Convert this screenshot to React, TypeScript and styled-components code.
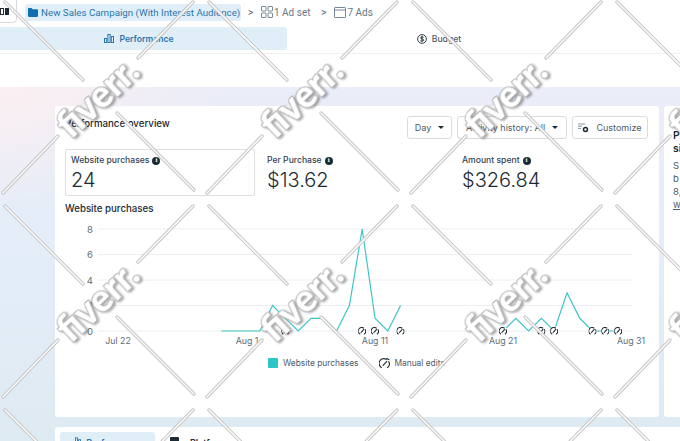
import React from "react";
import styled, { createGlobalStyle } from "styled-components";

const GlobalStyle = createGlobalStyle`
  html, body {
    margin: 0;
    padding: 0;
    background: #fff;
  }
  * {
    box-sizing: border-box;
  }
`;

const Page = styled.div`
  position: relative;
  width: 680px;
  height: 441px;
  overflow: hidden;
  background: #fff;
  color: #1c2b33;
  font-family: Inter, "Liberation Sans", sans-serif;
`;

const Breadcrumbs = styled.div`
  display: flex;
  align-items: center;
  height: 23px;
  padding-top: 1px;
  font-family: Roboto, "Liberation Sans", sans-serif;
  font-size: 10px;
  color: #67788a;
`;

const ColumnsButton = styled.button`
  display: flex;
  align-items: center;
  justify-content: flex-end;
  gap: 1px;
  width: 30px;
  height: 30px;
  margin: -9px 8px 0 -13px;
  padding: 8px 7px 0 0;
  background: #fff;
  border: 1px solid #d5d9dd;
  border-radius: 4px;
`;

const Bar = styled.span<{ $filled?: boolean }>`
  width: 4px;
  height: 7px;
  border: 1px solid #1c2b33;
  background: ${(p) => (p.$filled ? "#1c2b33" : "#fff")};
`;

const CampaignPill = styled.div`
  display: flex;
  align-items: center;
  gap: 3px;
  width: 216px;
  height: 17px;
  padding: 0 3px;
  border-radius: 3px;
  background: #e0eef9;
  color: #2a76ab;
  font-size: 9.75px;
  white-space: nowrap;
`;

const FolderIcon = styled.svg`
  flex: none;
  width: 10px;
  height: 9px;
`;

const Crumb = styled.div<{ $trail?: number }>`
  display: flex;
  align-items: center;
  gap: 1px;
  padding-right: ${(p) => p.$trail ?? 0}px;
  white-space: nowrap;
`;

const Chevron = styled.span`
  width: 9px;
  margin: 0 6px 0 5px;
  color: #4b5a68;
  font-size: 10px;
  text-align: center;
`;

const TabRow = styled.div`
  display: flex;
  gap: 4px;
  height: 27px;
  margin: 4px 0 0 -9px;
  padding-bottom: 3px;
  border-bottom: 1px solid #f0f1f3;
`;

const Tab = styled.div<{ $active?: boolean }>`
  display: flex;
  align-items: center;
  justify-content: center;
  gap: 5px;
  width: 296px;
  border-radius: 3px;
  background: ${(p) => (p.$active ? "#e0eef8" : "transparent")};
  color: ${(p) => (p.$active ? "#2a76ab" : "#4d5c69")};
  font-size: 8.6px;
  font-weight: ${(p) => (p.$active ? 600 : 500)};
`;

const Spacer = styled.div`
  height: 33px;
`;

const Backdrop = styled.div`
  display: flex;
  flex-direction: column;
  gap: 10px;
  height: 360px;
  padding: 19px 0 0 55px;
  background: radial-gradient(ellipse 220px 120px at 0 0, #fbeff1, rgba(251, 239, 241, 0)),
    linear-gradient(180deg, #ebedf8 0%, #e3edf8 50%, #deeaf2 100%);
`;

const CardRow = styled.div`
  display: flex;
  gap: 5px;
`;

const Card = styled.section`
  flex: none;
  width: 604px;
  height: 311px;
  padding: 10px;
  border-radius: 3px;
  background: #fff;
`;

const SideCard = styled.aside`
  flex: none;
  width: 100px;
  height: 311px;
  padding: 10px 9px;
  border-radius: 3px;
  background: #fff;
`;

const SideTitle = styled.div`
  font-size: 10.5px;
  font-weight: 600;
  line-height: 13px;
`;

const SideBody = styled.div`
  margin-top: 4px;
  font-size: 9.5px;
  line-height: 13px;
  color: #4d5c69;
`;

const SideLink = styled.span`
  text-decoration: underline;
`;

const Header = styled.header`
  display: flex;
  align-items: flex-start;
  height: 23px;
`;

const CardTitle = styled.h2`
  flex: 1;
  margin: 2px 0 0;
  font-size: 9.7px;
  font-weight: 500;
  line-height: 12px;
`;

const Controls = styled.div`
  display: flex;
  gap: 5px;
  margin-right: 1px;
`;

const ControlButton = styled.button<{ $width: number }>`
  display: flex;
  align-items: center;
  justify-content: center;
  gap: 7px;
  width: ${(p) => p.$width}px;
  height: 23px;
  padding: 0;
  background: #fff;
  border: 1px solid #d8dce0;
  border-radius: 3px;
  color: #4d5c69;
  font-family: inherit;
  font-size: 9px;
`;

const Caret = styled.span`
  width: 0;
  height: 0;
  border: 3.5px solid transparent;
  border-top: 3.5px solid #1c2b33;
  border-bottom: 0;
`;

const Metrics = styled.div`
  display: flex;
  height: 47px;
  margin-top: 10px;
`;

const Metric = styled.div<{ $selected?: boolean; $width: number; $offset?: number }>`
  width: ${(p) => p.$width}px;
  margin-left: ${(p) => p.$offset ?? 0}px;
  padding: 5px 5px;
  border: 1px solid ${(p) => (p.$selected ? "#dcdfe3" : "transparent")};
  border-radius: 2px;
`;

const MetricLabel = styled.div`
  display: flex;
  align-items: center;
  gap: 3px;
  font-size: 8.6px;
  font-weight: 500;
  line-height: 11px;
  color: #344250;
`;

const InfoDot = styled.span`
  display: inline-flex;
  align-items: center;
  justify-content: center;
  width: 8px;
  height: 8px;
  border-radius: 50%;
  background: #1c2b33;
  color: #fff;
  font-family: "Liberation Serif", serif;
  font-size: 7px;
  font-weight: 700;
  line-height: 1;
`;

const MetricValue = styled.div`
  margin-top: 2px;
  font-size: 20px;
  font-weight: 300;
  line-height: 24px;
`;

const ChartTitle = styled.h3`
  margin: 6px 0 -1px;
  font-size: 9.7px;
  font-weight: 500;
  line-height: 14px;
`;

const ChartSvg = styled.svg`
  display: block;
  width: 584px;
  height: 135px;
`;

const Legend = styled.div`
  display: flex;
  align-items: center;
  height: 10px;
  margin: 8px 0 0 203px;
  font-size: 8.4px;
  color: #4d5c69;
`;

const Swatch = styled.span`
  width: 10px;
  height: 10px;
  margin-right: 5px;
  border-radius: 1px;
  background: #2cc6c6;
`;

const LegendGap = styled.span`
  width: 21px;
`;

const LegendIcon = styled.svg`
  width: 11px;
  height: 11px;
  margin-right: 4px;
`;

const BottomCard = styled.section`
  height: 60px;
  padding: 5px;
  border-radius: 3px 0 0 0;
  background: #fff;
`;

const BottomTabs = styled.div`
  display: flex;
  align-items: flex-start;
`;

const BottomTab = styled.div<{ $active?: boolean }>`
  display: flex;
  justify-content: center;
  gap: ${(p) => (p.$active ? "5px" : "11px")};
  width: ${(p) => (p.$active ? "95px" : "auto")};
  height: 28px;
  margin-left: ${(p) => (p.$active ? "0" : "15px")};
  padding-top: 5px;
  border-radius: 3px;
  background: ${(p) => (p.$active ? "#e0eef8" : "transparent")};
  color: ${(p) => (p.$active ? "#2a76ab" : "#1c2b33")};
  font-size: 9px;
  font-weight: 600;
`;

const Watermark = styled.svg`
  position: absolute;
  top: 0;
  left: 0;
  width: 680px;
  height: 441px;
  pointer-events: none;
`;

const MarkText = styled.text`
  fill: #fff;
  stroke: #b4b4b4;
  stroke-width: 2px;
  stroke-linejoin: round;
  paint-order: stroke;
  font-family: Lato, Inter, sans-serif;
  font-size: 37px;
  font-weight: 900;
  filter: drop-shadow(1.5px 2px 1px rgba(0, 0, 0, 0.35));
`;

const LINE_TEAL = "#3fc4c6";
const X_AUG1 = 247;
const DAY = 12.8;

const dayX = (d: number) => X_AUG1 + DAY * (d - 1);
const valueY = (v: number) => 331 - v * 12.75;

// x values are days of August, Jul 30 is -1
const firstRun: [number, number][] = [
  [-1, 0], [0, 0], [1, 0], [2, 0], [3, 2], [4, 1], [5, 0], [6, 1], [7, 1],
  [8, 0], [9, 2], [10, 8], [11, 1], [12, 0], [13, 2],
];
const secondRun: [number, number][] = [
  [21, 0], [22, 1], [23, 0], [24, 1], [25, 0], [26, 3], [27, 1], [28, 0], [29, 0], [30, 0],
];
const editDays = [4, 10, 11, 13, 21, 24, 25, 28, 29, 30];
const gridValues = [8, 6, 4, 2, 0];
const dateLabels: [string, number][] = [
  ["Jul 22", 118], ["Aug 1", 247], ["Aug 11", 375], ["Aug 21", 503], ["Aug 31", 631],
];

const toPoints = (run: [number, number][]) =>
  run.map(([d, v]) => `${dayX(d).toFixed(1)},${valueY(v).toFixed(1)}`).join(" ");

function EditIcon({ x, y, size }: { x: number; y: number; size: number }) {
  return (
    <svg x={x - size / 2} y={y - size / 2} width={size} height={size} viewBox="0 0 12 12" fill="none">
      <path d="M2.600 10.400A5 5 0 0 1 8 1.500" stroke="#1c2b33" strokeWidth="1.600" strokeLinecap="round" />
      <path d="M10.600 4A5 5 0 0 1 9.400 10.400" stroke="#1c2b33" strokeWidth="1.600" strokeLinecap="round" />
      <path d="M4.400 8 8.500 3.600" stroke="#1c2b33" strokeWidth="1.600" strokeLinecap="round" />
    </svg>
  );
}

function Chart() {
  return (
    <ChartSvg viewBox="65 215 584 135">
      {gridValues.map((v) => (
        <g key={v}>
          <line x1={98} x2={632} y1={valueY(v)} y2={valueY(v)} stroke="#eceef0" strokeWidth="1" />
          <text x={93} y={valueY(v) + 3.500} textAnchor="end" fontSize="9.500" fill="#5f6d79">
            {v}
          </text>
        </g>
      ))}
      {dateLabels.map(([label, x]) => (
        <text key={label} x={x} y={344} textAnchor="middle" fontSize="8.800" fill="#5f6d79">
          {label}
        </text>
      ))}
      <polyline points={toPoints(firstRun)} fill="none" stroke={LINE_TEAL} strokeWidth="1.200" />
      <polyline points={toPoints(secondRun)} fill="none" stroke={LINE_TEAL} strokeWidth="1.200" />
      {editDays.map((d) => (
        <g key={d}>
          <circle cx={dayX(d)} cy={331} r={4.500} fill="#fff" />
          <EditIcon x={dayX(d)} y={331} size={8} />
        </g>
      ))}
    </ChartSvg>
  );
}

function WatermarkTile({ col, row }: { col: number; row: number }) {
  const segments = [
    "M5 2 83 80",
    "M193 2 138 58",
    "M117 113 194 190",
    "M58 136 3 193",
  ];
  return (
    <g transform={`translate(${col * 204} ${row * 204})`}>
      {segments.map((d) => (
        <g key={d}>
          <path d={d} stroke="#c4c4c4" strokeWidth="3.400" strokeLinecap="round" />
          <path d={d} stroke="#fbfbfb" strokeWidth="1.600" strokeLinecap="round" />
        </g>
      ))}
      <MarkText x={71} y={140} transform="rotate(-43 71 140)">
        fiverr.
      </MarkText>
    </g>
  );
}

const tileCols = [0, 1, 2, 3];
const tileRows = [-1, 0, 1, 2];

export default function App() {
  return (
    <Page>
      <GlobalStyle />
      <Breadcrumbs>
        <ColumnsButton aria-label="Columns">
          <Bar />
          <Bar $filled />
        </ColumnsButton>
        <CampaignPill>
          <FolderIcon viewBox="0 0 10 9">
            <path d="M0 1.200C0 .5.5 0 1.200 0h2.300l1 1.300h4.300c.7 0 1.200.5 1.200 1.200v5.300c0 .7-.5 1.200-1.200 1.200H1.200C.5 9 0 8.500 0 7.800Z" fill="#0f6fb3" />
          </FolderIcon>
          New Sales Campaign (With Interest Audience)
        </CampaignPill>
        <Chevron>&gt;</Chevron>
        <Crumb $trail={4}>
          <svg width="12" height="12" viewBox="0 0 12 12" fill="none" stroke="#67788a" strokeWidth="0.900">
            <rect x="0.500" y="0.500" width="4.500" height="4.500" rx="0.600" />
            <rect x="7" y="0.500" width="4.500" height="4.500" rx="0.600" />
            <rect x="0.500" y="7" width="4.500" height="4.500" rx="0.600" />
            <rect x="7" y="7" width="4.500" height="4.500" rx="0.600" />
          </svg>
          1 Ad set
        </Crumb>
        <Chevron>&gt;</Chevron>
        <Crumb>
          <svg width="12" height="11" viewBox="0 0 12 11" fill="none" stroke="#67788a" strokeWidth="0.900">
            <rect x="0.500" y="0.500" width="11" height="10" rx="0.600" />
            <path d="M0.500 3H11.500" />
          </svg>
          7 Ads
        </Crumb>
      </Breadcrumbs>
      <TabRow>
        <Tab $active>
          <svg width="10" height="9" viewBox="0 0 10 9" fill="none" stroke="#2a76ab" strokeWidth="1">
            <rect x="0.500" y="4.500" width="2.200" height="4" />
            <rect x="3.900" y="0.500" width="2.200" height="8" />
            <rect x="7.300" y="2.500" width="2.200" height="6" />
          </svg>
          Performance
        </Tab>
        <Tab>
          <svg width="10" height="10" viewBox="0 0 10 10" fill="none" stroke="#1c2b33" strokeWidth="0.900">
            <circle cx="5" cy="5" r="4.400" />
            <path d="M6.600 3.400C6 2.700 3.500 2.600 3.500 3.900 3.500 5.300 6.700 4.700 6.700 6.100 6.700 7.400 4 7.300 3.300 6.600M5 1.900V8.100" />
          </svg>
          Budget
        </Tab>
      </TabRow>
      <Spacer />
      <Backdrop>
        <CardRow>
          <Card>
            <Header>
              <CardTitle>Performance overview</CardTitle>
              <Controls>
                <ControlButton $width={45}>
                  Day <Caret />
                </ControlButton>
                <ControlButton $width={110}>
                  Activity history: All <Caret />
                </ControlButton>
                <ControlButton $width={76}>
                  <svg width="11" height="10" viewBox="0 0 11 10" fill="none" stroke="#1c2b33">
                    <path d="M0 1H7M0 3.200H4M0 5.400H3" strokeWidth="0.800" stroke="#67788a" />
                    <circle cx="7.500" cy="6.500" r="2" strokeWidth="1.500" />
                  </svg>
                  Customize
                </ControlButton>
              </Controls>
            </Header>
            <Metrics>
              <Metric $selected $width={190}>
                <MetricLabel>
                  Website purchases <InfoDot>i</InfoDot>
                </MetricLabel>
                <MetricValue>24</MetricValue>
              </Metric>
              <Metric $width={195} $offset={6}>
                <MetricLabel>
                  Per Purchase <InfoDot>i</InfoDot>
                </MetricLabel>
                <MetricValue>$13.62</MetricValue>
              </Metric>
              <Metric $width={190}>
                <MetricLabel>
                  Amount spent <InfoDot>i</InfoDot>
                </MetricLabel>
                <MetricValue>$326.84</MetricValue>
              </Metric>
            </Metrics>
            <ChartTitle>Website purchases</ChartTitle>
            <Chart />
            <Legend>
              <Swatch />
              Website purchases
              <LegendGap />
              <LegendIcon viewBox="0 0 12 12" fill="none">
                <path d="M2.600 10.400A5 5 0 0 1 8 1.500" stroke="#1c2b33" strokeWidth="1.200" strokeLinecap="round" />
                <path d="M10.600 4A5 5 0 0 1 9.400 10.400" stroke="#1c2b33" strokeWidth="1.200" strokeLinecap="round" />
                <path d="M4.400 8 8.500 3.600M8.500 .5 11 1.800" stroke="#1c2b33" strokeWidth="1.200" strokeLinecap="round" />
              </LegendIcon>
              Manual edits
            </Legend>
          </Card>
          <SideCard>
            <SideTitle>
              Y
              <br />
              P
              <br />
              si
            </SideTitle>
            <SideBody>
              S
              <br />
              b
              <br />
              8,
              <br />
              <SideLink>w</SideLink>
            </SideBody>
          </SideCard>
        </CardRow>
        <BottomCard>
          <BottomTabs>
            <BottomTab $active>
              <svg width="9" height="9" viewBox="0 0 10 9" fill="none" stroke="#2a76ab" strokeWidth="1">
                <rect x="0.500" y="4.500" width="2.200" height="4" />
                <rect x="3.900" y="0.500" width="2.200" height="8" />
                <rect x="7.300" y="2.500" width="2.200" height="6" />
              </svg>
              Performance
            </BottomTab>
            <BottomTab>
              <svg width="9" height="9" viewBox="0 0 9 9" fill="#1c2b33">
                <rect width="9" height="9" rx="1" />
              </svg>
              Platform
            </BottomTab>
          </BottomTabs>
        </BottomCard>
      </Backdrop>
      <Watermark viewBox="0 0 680 441" fill="none">
        {tileRows.map((row) =>
          tileCols.map((col) => <WatermarkTile key={`${col}-${row}`} col={col} row={row} />)
        )}
      </Watermark>
    </Page>
  );
}
